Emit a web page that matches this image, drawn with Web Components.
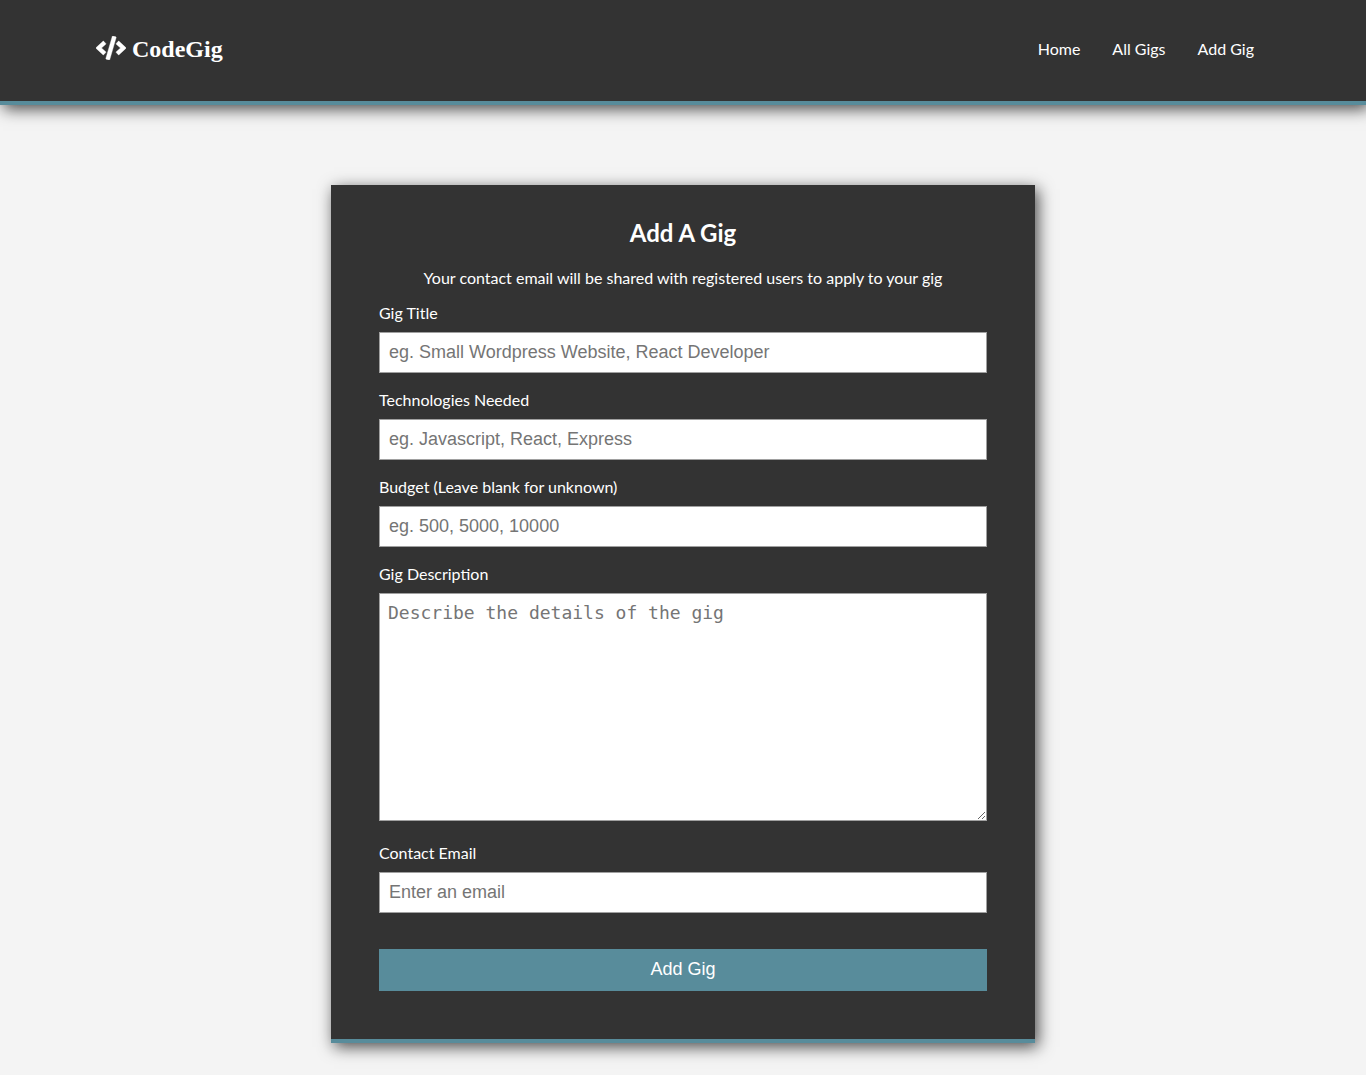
<!DOCTYPE html>
<html lang="en">
<head>
<meta charset="utf-8">
<title>CodeGig</title>
<style>
  :root { --dark: #333; --accent: #588c9b; --page: #f4f4f4; --shadow: 3px 4px 15px rgba(0, 0, 0, 0.7); }
  * { box-sizing: border-box; }
  body { margin: 0; background: var(--page); color: #fff; font: 16px/26px Lato, sans-serif; }
</style>
</head>
<body>
<gig-header>
  <gig-logo>CodeGig</gig-logo>
  <gig-link slot="nav" href="#home">Home</gig-link>
  <gig-link slot="nav" href="#gigs">All Gigs</gig-link>
  <gig-link slot="nav" href="#add">Add Gig</gig-link>
</gig-header>
<gig-card>
  <span slot="title">Add A Gig</span>
  <span slot="lead">Your contact email will be shared with registered users to apply to your gig</span>
  <gig-form></gig-form>
</gig-card>

<script>
const define = (name, html, setup) => {
  const template = document.createElement('template');
  template.innerHTML = html;
  customElements.define(name, class extends HTMLElement {
    constructor() {
      super();
      this.attachShadow({ mode: 'open' }).append(template.content.cloneNode(true));
    }
    connectedCallback() { if (setup) setup(this, this.shadowRoot); }
  });
};

define('gig-header', `
  <style>
    :host { display: block; }
    header { display: flex; justify-content: space-between; align-items: flex-start;
      padding: 32px 96px 35px; background: var(--dark);
      border-bottom: 4px solid var(--accent); box-shadow: var(--shadow); }
    nav { display: flex; line-height: 34px; }
  </style>
  <header><slot></slot><nav><slot name="nav"></slot></nav></header>`);

define('gig-logo', `
  <style>
    :host { display: block; }
    a { display: flex; align-items: center; gap: 6px; color: #fff; text-decoration: none;
      font: bold 24px/34px "Liberation Serif", serif; }
    svg { width: 30px; height: 24px; margin-bottom: 2px; }
  </style>
  <a href="#home">
    <svg viewBox="0 0 640 512" fill="currentColor" stroke="currentColor" stroke-width="8" aria-hidden="true"><path d="M278.9 511.5l-61-17.7c-6.4-1.8-10-8.5-8.2-14.9L346.2 8.7c1.8-6.4 8.5-10 14.9-8.2l61 17.7c6.4 1.8 10 8.5 8.2 14.9L293.8 503.3c-1.9 6.4-8.5 10.1-14.9 8.2zm-114-112.2l43.5-46.4c4.6-4.9 4.3-12.7-.8-17.2L117 256l90.6-79.7c5.1-4.5 5.5-12.3.8-17.2l-43.5-46.4c-4.5-4.8-12.1-5.1-17-.5L3.8 247.2c-5.1 4.7-5.1 12.8 0 17.5l144.1 135.1c4.9 4.6 12.5 4.4 17-.5zm327.2.6l144.1-135.1c5.1-4.7 5.1-12.8 0-17.5L492.1 112.1c-4.8-4.5-12.4-4.3-17 .5L431.6 159c-4.6 4.9-4.3 12.7.8 17.2L523 256l-90.6 79.7c-5.1 4.5-5.5 12.3-.8 17.2l43.5 46.4c4.5 4.9 12.1 5.1 17 .6z"/></svg>
    <span><slot></slot></span>
  </a>`);

define('gig-link', `
  <style>
    :host { display: block; }
    a { display: block; padding: 0 16px; color: #fff; text-decoration: none; }
  </style>
  <a><slot></slot></a>`,
  (host, root) => { root.querySelector('a').href = host.getAttribute('href'); });

define('gig-card', `
  <style>
    :host { display: block; padding: 80px 16px 32px; }
    section { box-sizing: border-box; max-width: 704px; margin: 0 auto; padding: 29px 48px 48px;
      background: var(--dark); border-bottom: 4px solid var(--accent); box-shadow: var(--shadow); }
    h2 { margin: 0 0 13px; font-size: 24px; line-height: 38px; text-align: center; }
    p { margin: 0 0 9px; text-align: center; }
  </style>
  <section><h2><slot name="title"></slot></h2><p><slot name="lead"></slot></p><slot></slot></section>`);

define('gig-form', `
  <style>
    :host { display: block; }
    form { display: flex; flex-direction: column; gap: 14px; }
    .tall { margin-bottom: 5px; }
    gig-button { margin-top: 22px; }
  </style>
  <form>
    <gig-field label="Gig Title" placeholder="eg. Small Wordpress Website, React Developer"></gig-field>
    <gig-field label="Technologies Needed" placeholder="eg. Javascript, React, Express"></gig-field>
    <gig-field label="Budget (Leave blank for unknown)" placeholder="eg. 500, 5000, 10000"></gig-field>
    <gig-field class="tall" label="Gig Description" placeholder="Describe the details of the gig" rows="10"></gig-field>
    <gig-field label="Contact Email" type="email" placeholder="Enter an email"></gig-field>
    <gig-button>Add Gig</gig-button>
  </form>`);

define('gig-field', `
  <style>
    :host { display: flex; flex-direction: column; gap: 6px; }
    input, textarea { box-sizing: border-box; width: 100%; margin: 0; padding: 8px 9px;
      border: 1px solid #a0a0a0; border-radius: 0; background: #fff; color: #333;
      font: 18px/23px "Liberation Sans", sans-serif; }
    textarea { display: block; padding: 8px; font: 18px/21px "DejaVu Sans Mono", monospace; resize: both; }
    ::placeholder { color: #757575; opacity: 1; }
  </style>
  <label for="control"></label>`,
  (host, root) => {
    if (root.getElementById('control')) return;
    root.querySelector('label').textContent = host.getAttribute('label');
    const rows = host.getAttribute('rows');
    const control = document.createElement(rows ? 'textarea' : 'input');
    control.id = 'control';
    control.placeholder = host.getAttribute('placeholder');
    if (rows) control.rows = rows;
    else control.type = host.getAttribute('type') || 'text';
    root.append(control);
  });

define('gig-button', `
  <style>
    :host { display: block; }
    button { display: block; width: 100%; margin: 0; padding: 9px 20px 11px; border: 0;
      background: var(--accent); color: #fff; cursor: pointer;
      font: 18px/22px "Liberation Sans", sans-serif; }
  </style>
  <button type="button"><slot></slot></button>`);
</script>
</body>
</html>
